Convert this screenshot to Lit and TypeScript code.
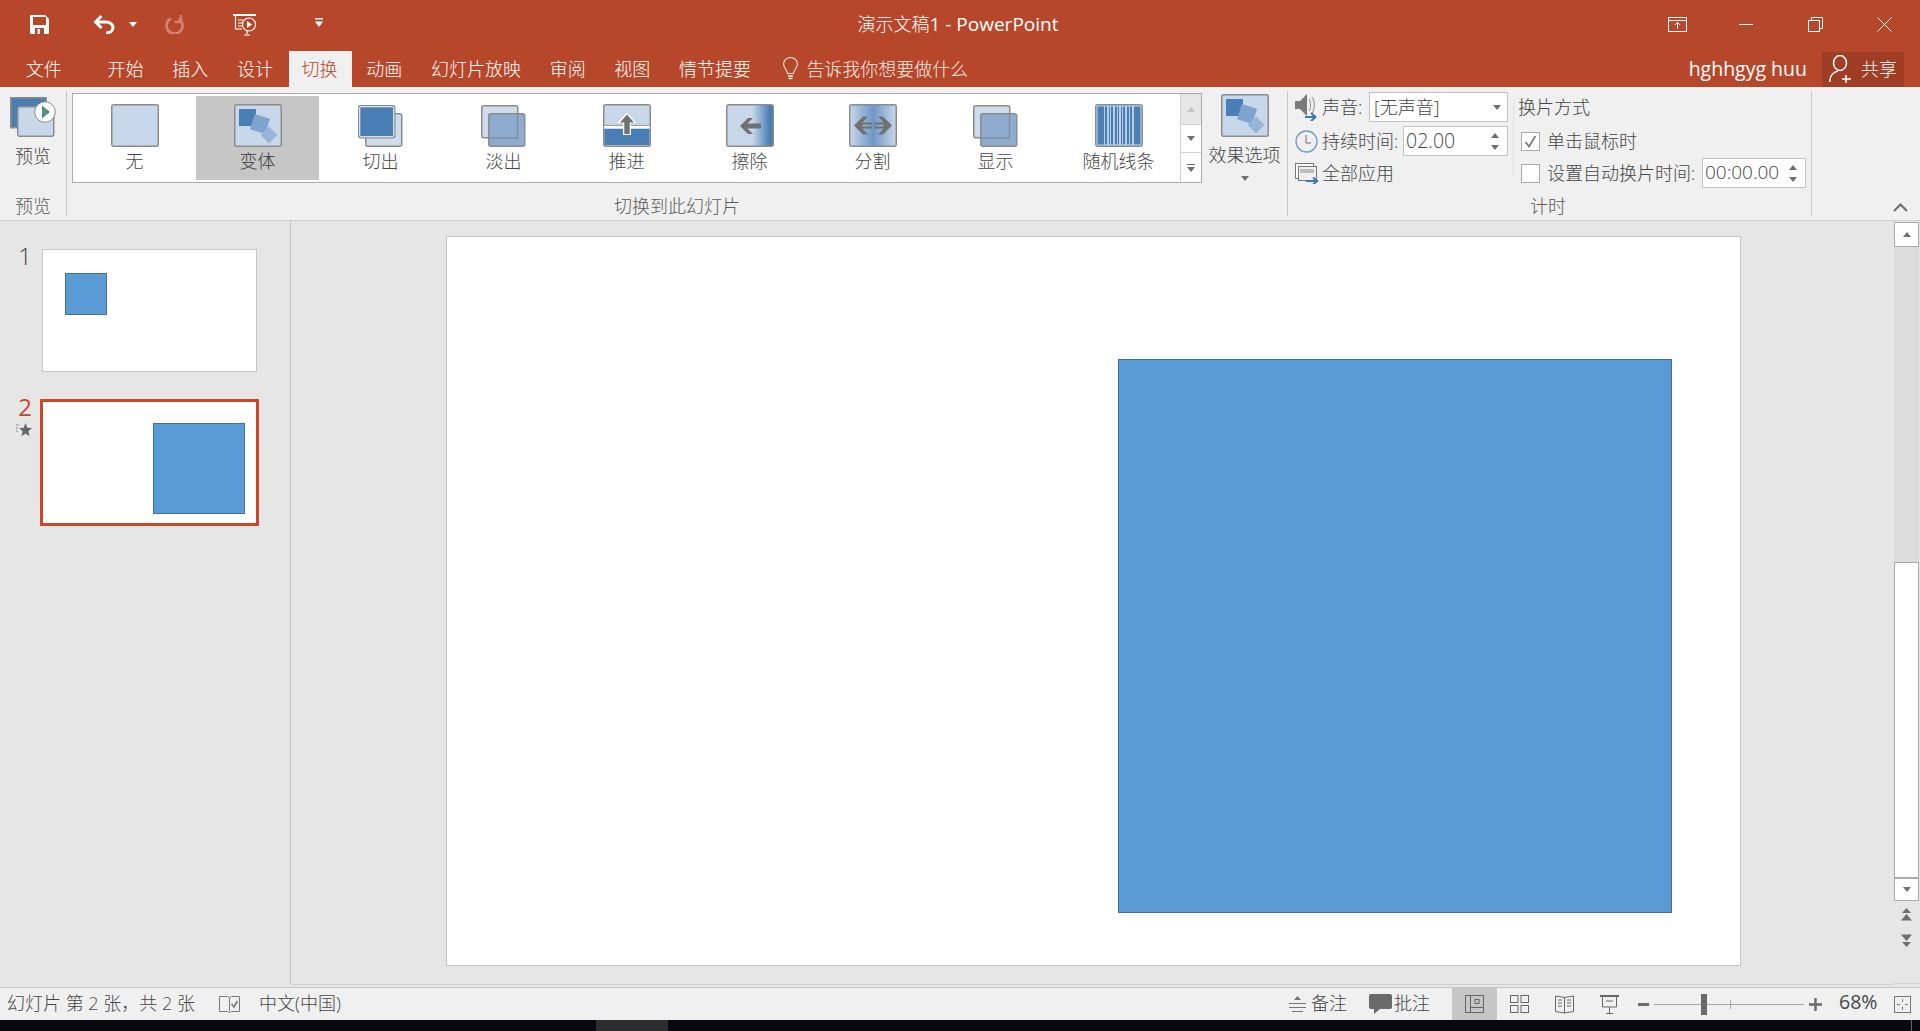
import { LitElement, html, svg, css } from 'lit';
import { customElement } from 'lit/decorators.js';

const FRAME = '#8c8c8c';
const LIGHT = '#c8d8ea';
const BLUE = '#4a7fb6';

const frame = (fill = LIGHT) => svg`<rect x=".75" y=".75" width="46.5" height="41.5" rx="2" fill=${fill} stroke=${FRAME} stroke-width="1.5"/>`;

const morphIcon = () => html`
  <svg width="48" height="43" viewBox="0 0 48 43">
    ${frame()}
    <rect x="5" y="5" width="17" height="17" fill=${BLUE}/>
    <rect x="18" y="12" width="16" height="16" fill="#7fa3cf" transform="rotate(17 26 20)"/>
    <rect x="29" y="25" width="12" height="12" fill="#97b5d8" transform="rotate(45 35 31)"/>
  </svg>`;

const noneIcon = () => html`<svg width="48" height="43" viewBox="0 0 48 43">${frame()}</svg>`;

const cutIcon = () => html`
  <svg width="45" height="43" viewBox="0 0 45 43">
    <rect x="7.75" y="9.75" width="36" height="32.5" rx="2" fill="#d0dcec" stroke=${FRAME} stroke-width="1.5"/>
    <rect x=".75" y="1.75" width="36" height="32" rx="2" fill=${BLUE} stroke=${FRAME} stroke-width="1.5"/>
    <rect x="1.75" y="2.75" width="34" height="30" rx="1" fill="none" stroke="#fff" stroke-width="1"/>
  </svg>`;

const fadeIcon = () => html`
  <svg width="45" height="43" viewBox="0 0 45 43">
    <rect x=".75" y="1.75" width="36" height="32" rx="2" fill="#d0dcec" stroke=${FRAME} stroke-width="1.5"/>
    <rect x="7.75" y="9.75" width="36" height="32.5" rx="2" fill="#8eabd0" stroke=${FRAME} stroke-width="1.5"/>
    <path d="M8.5 34H36.5V10.5" fill="none" stroke="#7f8ea3" stroke-width="1.3"/>
  </svg>`;

const pushIcon = () => html`
  <svg width="48" height="43" viewBox="0 0 48 43">
    ${frame()}
    <rect x="1.5" y="25" width="45" height="16" fill=${BLUE}/>
    <path d="M1 23H47" stroke="#fff" stroke-width="2"/>
    <path d="M1 21.400H47" stroke="#8c8c8c" stroke-width=".8"/>
    <path d="M24 8.500L33.500 19H28V31H20V19H14.500Z" fill="#fff"/>
    <path d="M24 10.500L31 18.500H26.700V30H21.300V18.500H17Z" fill="#717171"/>
  </svg>`;

const wipeIcon = () => html`
  <svg width="48" height="43" viewBox="0 0 48 43">
    <defs><linearGradient id="wipe"><stop offset=".55" stop-color=${LIGHT}/><stop offset=".92" stop-color=${BLUE}/></linearGradient></defs>
    ${frame('url(#wipe)')}
    <path d="M14 22L22 14H27L21.500 19.500H35V24.500H21.500L27 30H22Z" fill="#717171"/>
  </svg>`;

const splitIcon = () => html`
  <svg width="48" height="43" viewBox="0 0 48 43">
    <defs><linearGradient id="split"><stop offset="0" stop-color=${LIGHT}/><stop offset=".5" stop-color="#6f97c6"/><stop offset="1" stop-color=${LIGHT}/></linearGradient></defs>
    ${frame('url(#split)')}
    <path d="M5 21.500L14 12.500H19L13.500 18.500H23V20.500H13.500V22.500H23V24.500H13.500L19 30.500H14Z" fill="#717171"/>
    <path d="M43 21.500L34 12.500H29L34.500 18.500H25V20.500H34.500V22.500H25V24.500H34.500L29 30.500H34Z" fill="#717171"/>
  </svg>`;

const STRIPES = [[9, 1], [12, 2], [15, 1], [18, 2], [22, 1], [24, 2], [27, 1], [30, 2], [34, 1], [37, 2]];

const barsIcon = () => html`
  <svg width="48" height="43" viewBox="0 0 48 43">
    ${frame(BLUE)}
    ${STRIPES.map(([x, w]) => svg`<rect x=${x} y="2" width=${w} height="39" fill="#b9cde6"/>`)}
    <rect x="2" y="2" width="44" height="39" fill="none" stroke="#e8eef6" stroke-width=".8"/>
  </svg>`;

const TRANSITIONS = [
  { name: '无', icon: noneIcon },
  { name: '变体', icon: morphIcon, active: true },
  { name: '切出', icon: cutIcon },
  { name: '淡出', icon: fadeIcon },
  { name: '推进', icon: pushIcon },
  { name: '擦除', icon: wipeIcon },
  { name: '分割', icon: splitIcon },
  { name: '显示', icon: fadeIcon },
  { name: '随机线条', icon: barsIcon },
];

const TABS = ['开始', '插入', '设计', '切换', '动画', '幻灯片放映', '审阅', '视图', '情节提要'];

@customElement('app-root')
export class AppRoot extends LitElement {
  static styles = css`
    :host {
      display: flex;
      flex-direction: column;
      width: 1920px;
      height: 1031px;
      overflow: hidden;
      background: #e6e6e6;
      color: #464646;
      font-family: "Open Sans", "Noto Sans CJK SC", sans-serif;
      font-size: 18px;
      font-weight: 300;
    }
    svg { display: block; flex: none; }
    .lat { font-size: 19.5px; font-weight: 400; }

    .titlebar {
      display: grid;
      grid-template-columns: 1fr auto 1fr;
      align-items: center;
      height: 49px;
      padding-bottom: 2px;
      background: #b7472a;
      color: #fff;
    }
    .quick, .winbtns { display: flex; align-items: center; }
    .quick { padding-left: 30px; }
    .winbtns { justify-content: flex-end; padding-right: 28px; }
    .doc-title { padding: 0 4px 2px 0; white-space: nowrap; }
    .doc-title .lat { font-size: 19px; }

    .tabs {
      display: flex;
      align-items: stretch;
      height: 36px;
      background: #b7472a;
      color: #fff;
    }
    .tab { display: flex; align-items: center; padding: 0 14.35px 2px; white-space: nowrap; }
    .tab.file { margin-left: 11.5px; margin-right: 17px; }
    .tab.active { margin-left: 1.5px; padding-left: 12.85px; background: #f0f0f0; color: #b7472a; }
    .tell { display: flex; align-items: center; margin-left: 18px; gap: 8px; padding-bottom: 2px; opacity: .9; }
    .account { margin-left: auto; display: flex; align-items: center; }
    .share {
      display: flex;
      align-items: center;
      gap: 9px;
      width: 82px;
      height: 35px;
      box-sizing: border-box;
      margin: 0 16px 0 15px;
      padding-left: 7px;
      background: #9f3e25;
    }
    .account span { padding-bottom: 2px; }

    .ribbon {
      display: flex;
      height: 133px;
      background: #f0f0f0;
      border-bottom: 1px solid #cfcfcf;
      position: relative;
    }
    .group {
      display: flex;
      flex-direction: column;
      height: 125px;
      margin-top: 4px;
      border-right: 1px solid #c8c8c8;
      box-sizing: border-box;
    }
    .group-body { flex: 1; display: flex; min-height: 0; }
    .group-label { height: 20px; line-height: 20px; text-align: center; color: #5c5c5c; white-space: nowrap; }
    .g-preview { width: 67px; }
    .g-trans { width: 1221px; }
    .g-timing { width: 524px; }
    .g-timing .group-label { padding-right: 3px; }
    .big-btn { display: flex; flex-direction: column; align-items: center; white-space: nowrap; }
    .preview-btn { width: 66px; padding-top: 6px; gap: 5px; }

    .gallery {
      display: flex;
      width: 1130px;
      height: 90px;
      margin: 2px 0 0 5px;
      box-sizing: border-box;
      border: 1px solid #ababab;
      background: #fff;
    }
    .t-item {
      width: 123px;
      height: 84px;
      margin-top: 2px;
      display: flex;
      flex-direction: column;
      align-items: center;
      padding-top: 8px;
      box-sizing: border-box;
      white-space: nowrap;
    }
    .t-item.active { background: #c6c6c6; color: #3c3c3c; }
    .t-icon { height: 43px; display: flex; align-items: center; }
    .t-name { line-height: 22px; margin-top: 3px; }
    .g-scroll {
      margin-left: auto;
      width: 20px;
      display: grid;
      grid-template-rows: 30px 28px 1fr;
      border-left: 1px solid #d0d0d0;
    }
    .g-scroll > div { display: flex; align-items: center; justify-content: center; }
    .g-scroll > div + div { border-top: 1px solid #d0d0d0; }
    .g-scroll .up { background: #e6e6e6; }
    .effect-btn { width: 85px; padding-top: 3px; }
    .effect-btn span { margin-top: 6px; line-height: 24px; }
    .effect-btn i { margin-top: 9px; }

    .tri-up, .tri-down { display: block; width: 0; height: 0; border-left: 4px solid transparent; border-right: 4px solid transparent; }
    .tri-up { border-bottom: 5px solid #6f6f6f; }
    .tri-down { border-top: 5px solid #6f6f6f; }
    .tri-up.off { border-bottom-color: #c4c4c4; }
    .menu-more { display: flex; flex-direction: column; gap: 2px; align-items: center; }
    .menu-more b { display: block; width: 8px; height: 1px; background: #6f6f6f; }

    .g-timing .group-body { padding-left: 7px; }
    .col { display: grid; grid-template-rows: 34px 32px 30px; align-items: start; padding-top: 1px; white-space: nowrap; }
    .col.left { width: 213px; margin-right: 5px; }
    .col.right { width: 288px; margin-left: 4px; }
    .vsep { width: 1px; height: 75px; margin-top: 12px; background: #e2e2e2; }
    .row { display: flex; align-items: center; height: 30px; }
    .row > span, .field > span { padding-bottom: 2px; }
    .row .lead { width: 27px; flex: none; }
    .field {
      display: flex;
      align-items: center;
      justify-content: space-between;
      height: 30px;
      margin-left: auto;
      padding: 0 6px 0 4px;
      box-sizing: border-box;
      background: #fff;
      border: 1px solid #c2c2c2;
      color: #444;
    }
    .field .lat { font-weight: 300; }
    .f-sound { width: 139px; }
    .f-dur { width: 105px; padding-left: 2px; }
    .f-auto { width: 104px; padding-left: 2px; }
    .f-auto .lat { font-size: 19px; }
    .spin { display: flex; flex-direction: column; gap: 7px; margin-right: 2px; }
    .check {
      width: 19px;
      height: 19px;
      margin: 0 7px 0 3px;
      box-sizing: border-box;
      background: #fff;
      border: 1px solid #ababab;
      display: flex;
      align-items: center;
      justify-content: center;
    }
    .collapse { position: absolute; right: 12px; bottom: 8px; }

    .workspace { display: flex; height: 766px; }
    .pane {
      width: 290px;
      height: 763px;
      flex: none;
      border-right: 1px solid #c6c6c6;
    }
    .slide-row { display: flex; align-items: flex-start; }
    .slide-row.first { margin-top: 28px; }
    .slide-row.second { margin-top: 27px; }
    .num-col { width: 40px; flex: none; display: flex; flex-direction: column; align-items: flex-end; padding-right: 6px; box-sizing: border-box; }
    .num { font-family: "Open Sans", sans-serif; font-size: 24px; line-height: 14px; color: #444; padding-right: 2px; }
    .slide-row.second .num { color: #c8492a; line-height: 16px; font-weight: 400; }
    .star { margin: 8px 2px 0 0; }
    .thumb { position: relative; background: #fff; box-sizing: border-box; }
    .thumb.plain { width: 215px; height: 123px; margin-left: 2px; border: 1px solid #c6c6c6; }
    .thumb.current { width: 219px; height: 127px; border: 3px solid #c8492a; }
    .shape { position: absolute; background: #5b9bd5; border: 1px solid #41719c; box-sizing: border-box; }

    .main {
      flex: 1;
      height: 748px;
      border-bottom: 1px solid #cfcfcf;
      padding: 15px 0 0 155px;
    }
    .canvas {
      position: relative;
      width: 1295px;
      height: 730px;
      box-sizing: border-box;
      background: #fff;
      border: 1px solid #c6c6c6;
    }
    .scroller { width: 26px; flex: none; display: flex; flex-direction: column; padding-top: 1px; height: 763px; box-sizing: border-box; border-bottom: 1px solid #cfcfcf; }
    .s-btn {
      width: 25px;
      height: 25px;
      box-sizing: border-box;
      background: #fff;
      border: 1px solid #ababab;
      display: flex;
      align-items: center;
      justify-content: center;
    }
    .s-btn.down { height: 23px; }
    .s-track { width: 25px; height: 315px; background: #dcdcdc; }
    .s-thumb { width: 25px; height: 316px; background: #fff; border: 1px solid #ababab; box-sizing: border-box; }
    .s-jump { width: 25px; display: flex; flex-direction: column; align-items: center; gap: 13px; margin-top: 7px; }

    .status {
      display: flex;
      align-items: center;
      height: 33px;
      box-sizing: border-box;
      background: #f0f0f0;
      border-top: 1px solid #c6c6c6;
      white-space: nowrap;
    }
    .status span { padding-bottom: 5px; }
    .status .count { margin-left: 7px; width: 212px; }
    .status .lang { margin-left: 19px; }
    .notes { margin-left: auto; display: flex; align-items: center; gap: 5px; }
    .comments { margin-left: 22px; display: flex; align-items: center; gap: 2px; }
    .views { display: flex; margin-left: 22px; height: 32px; }
    .view { width: 45px; display: flex; align-items: center; justify-content: center; }
    .view.on { background: #c6c6c6; }
    .zoom-minus { margin-left: 6px; }
    .slider { position: relative; width: 150px; height: 1px; margin-left: 5px; background: #a8a8a8; }
    .slider .knob { position: absolute; left: 47px; top: -10px; width: 6px; height: 21px; background: #6a6a6a; }
    .slider .tick { position: absolute; left: 76px; top: -4px; width: 1px; height: 9px; background: #a8a8a8; }
    .zoom-plus { margin-left: 5px; }
    .percent { margin-left: 17px; width: 38px; }
    .fit { margin: 0 9px 0 17px; }

    .taskbar { display: flex; height: 11px; overflow: hidden; background: #09090f; }
    .taskbar .active-app { width: 72px; margin-left: 596px; background: #2c2c2e; }
    .clock { margin-left: 1093px; padding-top: 8px; color: #fff; font-size: 15px; line-height: 20px; }
    .edge { width: 1px; margin-left: 112px; background: #666; }
  `;

  private renderTitleBar() {
    return html`
      <div class="titlebar">
        <div class="quick">
          <svg width="19" height="19" viewBox="0 0 19 19"><path fill="#fff" d="M0 1a1 1 0 0 1 1-1h14l4 4v14a1 1 0 0 1-1 1H1a1 1 0 0 1-1-1Z"/><rect x="3" y="2" width="13" height="8" fill="#b7472a"/><rect x="5" y="13" width="9" height="6" fill="#b7472a"/><rect x="7.500" y="14" width="2.500" height="5" fill="#fff"/></svg>
          <svg style="margin-left:44px" width="22" height="19" viewBox="0 0 22 19"><path d="M8.500 1L2.500 7l6 6" fill="none" stroke="#fff" stroke-width="3"/><path d="M3 7h10c4 0 7 2.500 7 5.500S17.500 18 13 18" fill="none" stroke="#fff" stroke-width="3"/></svg>
          <svg style="margin-left:14px" width="8" height="5" viewBox="0 0 8 5"><path d="M0 0h8L4 5Z" fill="#fff"/></svg>
          <svg style="margin-left:28px;opacity:.32" width="19" height="19" viewBox="0 0 19 19"><path d="M6 3.500a8 8 0 1 0 7.500.2" fill="none" stroke="#fff" stroke-width="2.800"/><path d="M16 0v7H9.500" fill="none" stroke="#fff" stroke-width="2.400"/></svg>
          <svg style="margin-left:49px" width="24" height="22" viewBox="0 0 24 22" fill="none" stroke="#fff" stroke-width="1.200"><path d="M0 1h23" stroke-width="2"/><path d="M2.500 1.500V15H9"/><path d="M5 6h5M5 9h4M5 12h4"/><circle cx="16" cy="10.500" r="6.500"/><path d="M14 7v7l5-3.500Z" fill="#fff" stroke="none"/><path d="M11 21h6M14 17v3" /></svg>
          <svg style="margin-left:58px;margin-bottom:4px" width="8" height="9" viewBox="0 0 8 9"><path d="M0 0h8v1.500H0ZM0 3.500h8L4 9Z" fill="#fff"/></svg>
        </div>
        <div class="doc-title">演示文稿<span class="lat">1 - PowerPoint</span></div>
        <div class="winbtns">
          <svg width="19" height="15" viewBox="0 0 19 15" fill="none" stroke="#fff"><rect x=".5" y=".5" width="18" height="14"/><path d="M.5 3.500h18"/><path d="M9.500 12V5.500M6.800 8l2.700-2.700L12.200 8"/></svg>
          <svg style="margin-left:52px" width="14" height="1" viewBox="0 0 14 1"><path d="M0 .5h14" stroke="#fff"/></svg>
          <svg style="margin-left:55px" width="15" height="15" viewBox="0 0 15 15" fill="none" stroke="#fff"><rect x=".5" y="3.500" width="11" height="11"/><path d="M3.500 3.500v-3h11v11h-3"/></svg>
          <svg style="margin-left:54px" width="15" height="15" viewBox="0 0 15 15" fill="none" stroke="#fff"><path d="M.5.500l14 14M14.500.500l-14 14"/></svg>
        </div>
      </div>
    `;
  }

  private renderTabs() {
    return html`
      <div class="tabs">
        <div class="tab file">文件</div>
        ${TABS.map(t => html`<div class="tab ${t === '切换' ? 'active' : ''}">${t}</div>`)}
        <div class="tell">
          <svg width="15" height="23" viewBox="0 0 15 23" fill="none" stroke="#fff" stroke-width="1.100"><path d="M4.500 16.500C4 12.500.600 11 .600 7a6.900 6.500 0 0 1 13.800 0c0 4-3.400 5.500-3.900 9.500Z"/><path d="M5 19h5M5.500 21.500h4" stroke-width="1.600"/></svg>
          <span>告诉我你想要做什么</span>
        </div>
        <div class="account">
          <span class="lat">hghhgyg huu</span>
          <div class="share">
            <svg width="23" height="28" viewBox="0 0 23 28" fill="none" stroke="#fff" stroke-width="1.500"><ellipse cx="11" cy="8" rx="6.500" ry="7.500"/><path d="M.7 27c0-6 3.500-10 8.300-11M17 20v8M13 24h9"/></svg>
            <span>共享</span>
          </div>
        </div>
      </div>
    `;
  }

  private renderGallery() {
    return html`
      <div class="gallery">
        ${TRANSITIONS.map(t => html`
          <div class="t-item ${t.active ? 'active' : ''}">
            <div class="t-icon">${t.icon()}</div>
            <div class="t-name">${t.name}</div>
          </div>
        `)}
        <div class="g-scroll">
          <div class="up"><i class="tri-up off"></i></div>
          <div><i class="tri-down"></i></div>
          <div><div class="menu-more"><b></b><i class="tri-down"></i></div></div>
        </div>
      </div>
    `;
  }

  private renderTiming() {
    return html`
      <div class="col left">
        <div class="row">
          <div class="lead"><svg width="24" height="28" viewBox="0 0 24 28"><path d="M0 8h5l7-7v22l-7-7H0Z" fill="#7a7a7a"/><path d="M14 6c2 3 2 9 0 12M17 4c3 4 3 12 0 16" fill="none" stroke="#888"/><path d="M10 24h10M16 20l4.500 4-4.500 4" fill="none" stroke="#3f77b3" stroke-width="2"/></svg></div>
          <span>声音:</span>
          <div class="field f-sound"><span>[无声音]</span><i class="tri-down"></i></div>
        </div>
        <div class="row">
          <div class="lead"><svg width="23" height="23" viewBox="0 0 23 23" fill="none"><circle cx="11.500" cy="11.500" r="10.500" stroke="#6f9ccb" stroke-width="1.300"/><path d="M11 5v8h5" stroke="#6a6a6a"/></svg></div>
          <span>持续时间:</span>
          <div class="field f-dur"><span class="lat">02.00</span><div class="spin"><i class="tri-up"></i><i class="tri-down"></i></div></div>
        </div>
        <div class="row">
          <div class="lead"><svg width="24" height="21" viewBox="0 0 24 21" fill="none"><rect x=".5" y=".5" width="18" height="15" fill="#fff" stroke="#777"/><rect x="3.500" y="3.500" width="18" height="14" fill="#f0f0f0" stroke="#777"/><rect x="5" y="6" width="14" height="4" fill="#bdbdbd"/><path d="M11 18h11M18 14.500l4.200 3.500-4.200 3.500" stroke="#3f77b3" stroke-width="2"/></svg></div>
          <span>全部应用</span>
        </div>
      </div>
      <div class="vsep"></div>
      <div class="col right">
        <div class="row"><span>换片方式</span></div>
        <div class="row">
          <div class="check"><svg width="13" height="13" viewBox="0 0 13 13"><path d="M1.500 7l3.500 4.500L11.500 1" fill="none" stroke="#7a7a7a" stroke-width="1.800"/></svg></div>
          <span>单击鼠标时</span>
        </div>
        <div class="row">
          <div class="check"></div>
          <span>设置自动换片时间:</span>
          <div class="field f-auto"><span class="lat">00:00.00</span><div class="spin"><i class="tri-up"></i><i class="tri-down"></i></div></div>
        </div>
      </div>
    `;
  }

  private renderRibbon() {
    return html`
      <div class="ribbon">
        <div class="group g-preview">
          <div class="group-body">
            <div class="big-btn preview-btn">
              <svg width="46" height="40" viewBox="0 0 46 40">
                <rect x=".75" y=".75" width="35.500" height="30" fill=${BLUE} stroke=${FRAME} stroke-width="1.500"/>
                <rect x="7.750" y="9.750" width="36" height="29.500" rx="2" fill=${LIGHT} stroke=${FRAME} stroke-width="1.500"/>
                <ellipse cx="35" cy="15" rx="10.300" ry="10.300" fill="#fff" stroke="#8c8c8c"/>
                <path d="M32 8.500L40 15l-8 6.500Z" fill="#4d9384"/>
              </svg>
              <span>预览</span>
            </div>
          </div>
          <div class="group-label">预览</div>
        </div>
        <div class="group g-trans">
          <div class="group-body">
            ${this.renderGallery()}
            <div class="big-btn effect-btn">
              ${morphIcon()}
              <span>效果选项</span>
              <i class="tri-down"></i>
            </div>
          </div>
          <div class="group-label">切换到此幻灯片</div>
        </div>
        <div class="group g-timing">
          <div class="group-body">${this.renderTiming()}</div>
          <div class="group-label">计时</div>
        </div>
        <svg class="collapse" width="15" height="9" viewBox="0 0 15 9"><path d="M1 8l6.500-6.500L14 8" fill="none" stroke="#6f6f6f" stroke-width="2.200"/></svg>
      </div>
    `;
  }

  private renderPane() {
    return html`
      <div class="pane">
        <div class="slide-row first">
          <div class="num-col"><div class="num">1</div></div>
          <div class="thumb plain"><div class="shape" style="left:22px;top:23px;width:42px;height:42px"></div></div>
        </div>
        <div class="slide-row second">
          <div class="num-col">
            <div class="num">2</div>
            <svg class="star" width="16" height="14" viewBox="0 0 16 14"><path d="M9.500 0l1.800 4.800 4.700.3-3.600 3.100 1.200 5-4.100-2.700-4.100 2.700 1.200-5-3.600-3.100 4.700-.3Z" fill="#666"/><path d="M0 2h3M0 5h2M0 8h2" stroke="#888"/></svg>
          </div>
          <div class="thumb current"><div class="shape" style="left:110px;top:21px;width:92px;height:91px"></div></div>
        </div>
      </div>
    `;
  }

  private renderStatus() {
    return html`
      <div class="status">
        <span class="count">幻灯片 第 2 张，共 2 张</span>
        <svg width="21" height="18" viewBox="0 0 21 18" fill="none" stroke="#777"><path d="M.5 1.500h8l2 1.500 2-1.500h8v15h-8l-2 1-2-1h-8Z"/><path d="M10.500 3v13"/><path d="M12.500 9l2.500 3 3.500-6" stroke-width="1.600"/></svg>
        <span class="lang">中文(中国)</span>
        <div class="notes">
          <svg width="17" height="17" viewBox="0 0 17 17" fill="#777"><path d="M8.500 0l3.500 4H5Z"/><path d="M0 7.500h17M0 11.500h17M3 15.500h11" stroke="#777"/></svg>
          <span>备注</span>
        </div>
        <div class="comments">
          <svg width="23" height="20" viewBox="0 0 23 20"><path d="M2 0h19a2 2 0 0 1 2 2v11a2 2 0 0 1-2 2H11l-6 5v-5H2a2 2 0 0 1-2-2V2a2 2 0 0 1 2-2Z" fill="#6a6a6a"/></svg>
          <span>批注</span>
        </div>
        <div class="views">
          <div class="view on"><svg width="19" height="18" viewBox="0 0 19 18" fill="none" stroke="#666"><rect x=".5" y=".5" width="18" height="17"/><path d="M5.500 1v16M5.500 12.500h13"/><rect x="10" y="4.500" width="4" height="4"/></svg></div>
          <div class="view"><svg width="19" height="18" viewBox="0 0 19 18" fill="none" stroke="#666"><rect x=".5" y=".5" width="7.500" height="7"/><rect x="11" y=".5" width="7.500" height="7"/><rect x=".5" y="10.500" width="7.500" height="7"/><rect x="11" y="10.500" width="7.500" height="7"/></svg></div>
          <div class="view"><svg width="19" height="19" viewBox="0 0 19 19" fill="none" stroke="#666"><path d="M9.500 2.500L.5 1v15.500l9 1.500 9-1.500V1Z"/><path d="M9.500 2.500V18M3 5h4M3 8h4M3 11h4M12 5h4M12 8h4M12 11h4"/></svg></div>
          <div class="view"><svg width="19" height="19" viewBox="0 0 19 19" fill="none" stroke="#666"><path d="M0 1h19" stroke-width="2"/><path d="M2.500 1v11h14V1M6 6h7M9.500 12v6M6 18.500h7"/></svg></div>
        </div>
        <svg class="zoom-minus" width="11" height="3" viewBox="0 0 11 3"><rect width="11" height="3" fill="#6a6a6a"/></svg>
        <div class="slider"><div class="tick"></div><div class="knob"></div></div>
        <svg class="zoom-plus" width="13" height="13" viewBox="0 0 13 13"><path d="M0 6.500h13M6.500 0v13" stroke="#6a6a6a" stroke-width="2.400"/></svg>
        <span class="percent lat">68%</span>
        <svg class="fit" width="17" height="17" viewBox="0 0 17 17" fill="none" stroke="#777"><rect x=".5" y=".5" width="16" height="16"/><path d="M8.500 3v3M8.500 11v3M3 8.500h3M11 8.500h3"/></svg>
      </div>
    `;
  }

  render() {
    return html`
      ${this.renderTitleBar()}
      ${this.renderTabs()}
      ${this.renderRibbon()}
      <div class="workspace">
        ${this.renderPane()}
        <div class="main">
          <div class="canvas"><div class="shape" style="left:671px;top:122px;width:554px;height:554px"></div></div>
        </div>
        <div class="scroller">
          <div class="s-btn"><i class="tri-up"></i></div>
          <div class="s-track"></div>
          <div class="s-thumb"></div>
          <div class="s-btn down"><i class="tri-down"></i></div>
          <div class="s-jump">
            <svg width="11" height="13" viewBox="0 0 11 13" fill="#6f6f6f"><path d="M5.500 0L10 5H1ZM5.500 6L11 12.500H0Z"/></svg>
            <svg width="11" height="13" viewBox="0 0 11 13" fill="#6f6f6f"><path d="M0 .5h11L5.500 7ZM1 8h9l-4.500 5Z"/></svg>
          </div>
        </div>
      </div>
      ${this.renderStatus()}
      <div class="taskbar">
        <div class="active-app"></div>
        <div class="clock">10:48</div>
        <div class="edge"></div>
      </div>
    `;
  }
}
